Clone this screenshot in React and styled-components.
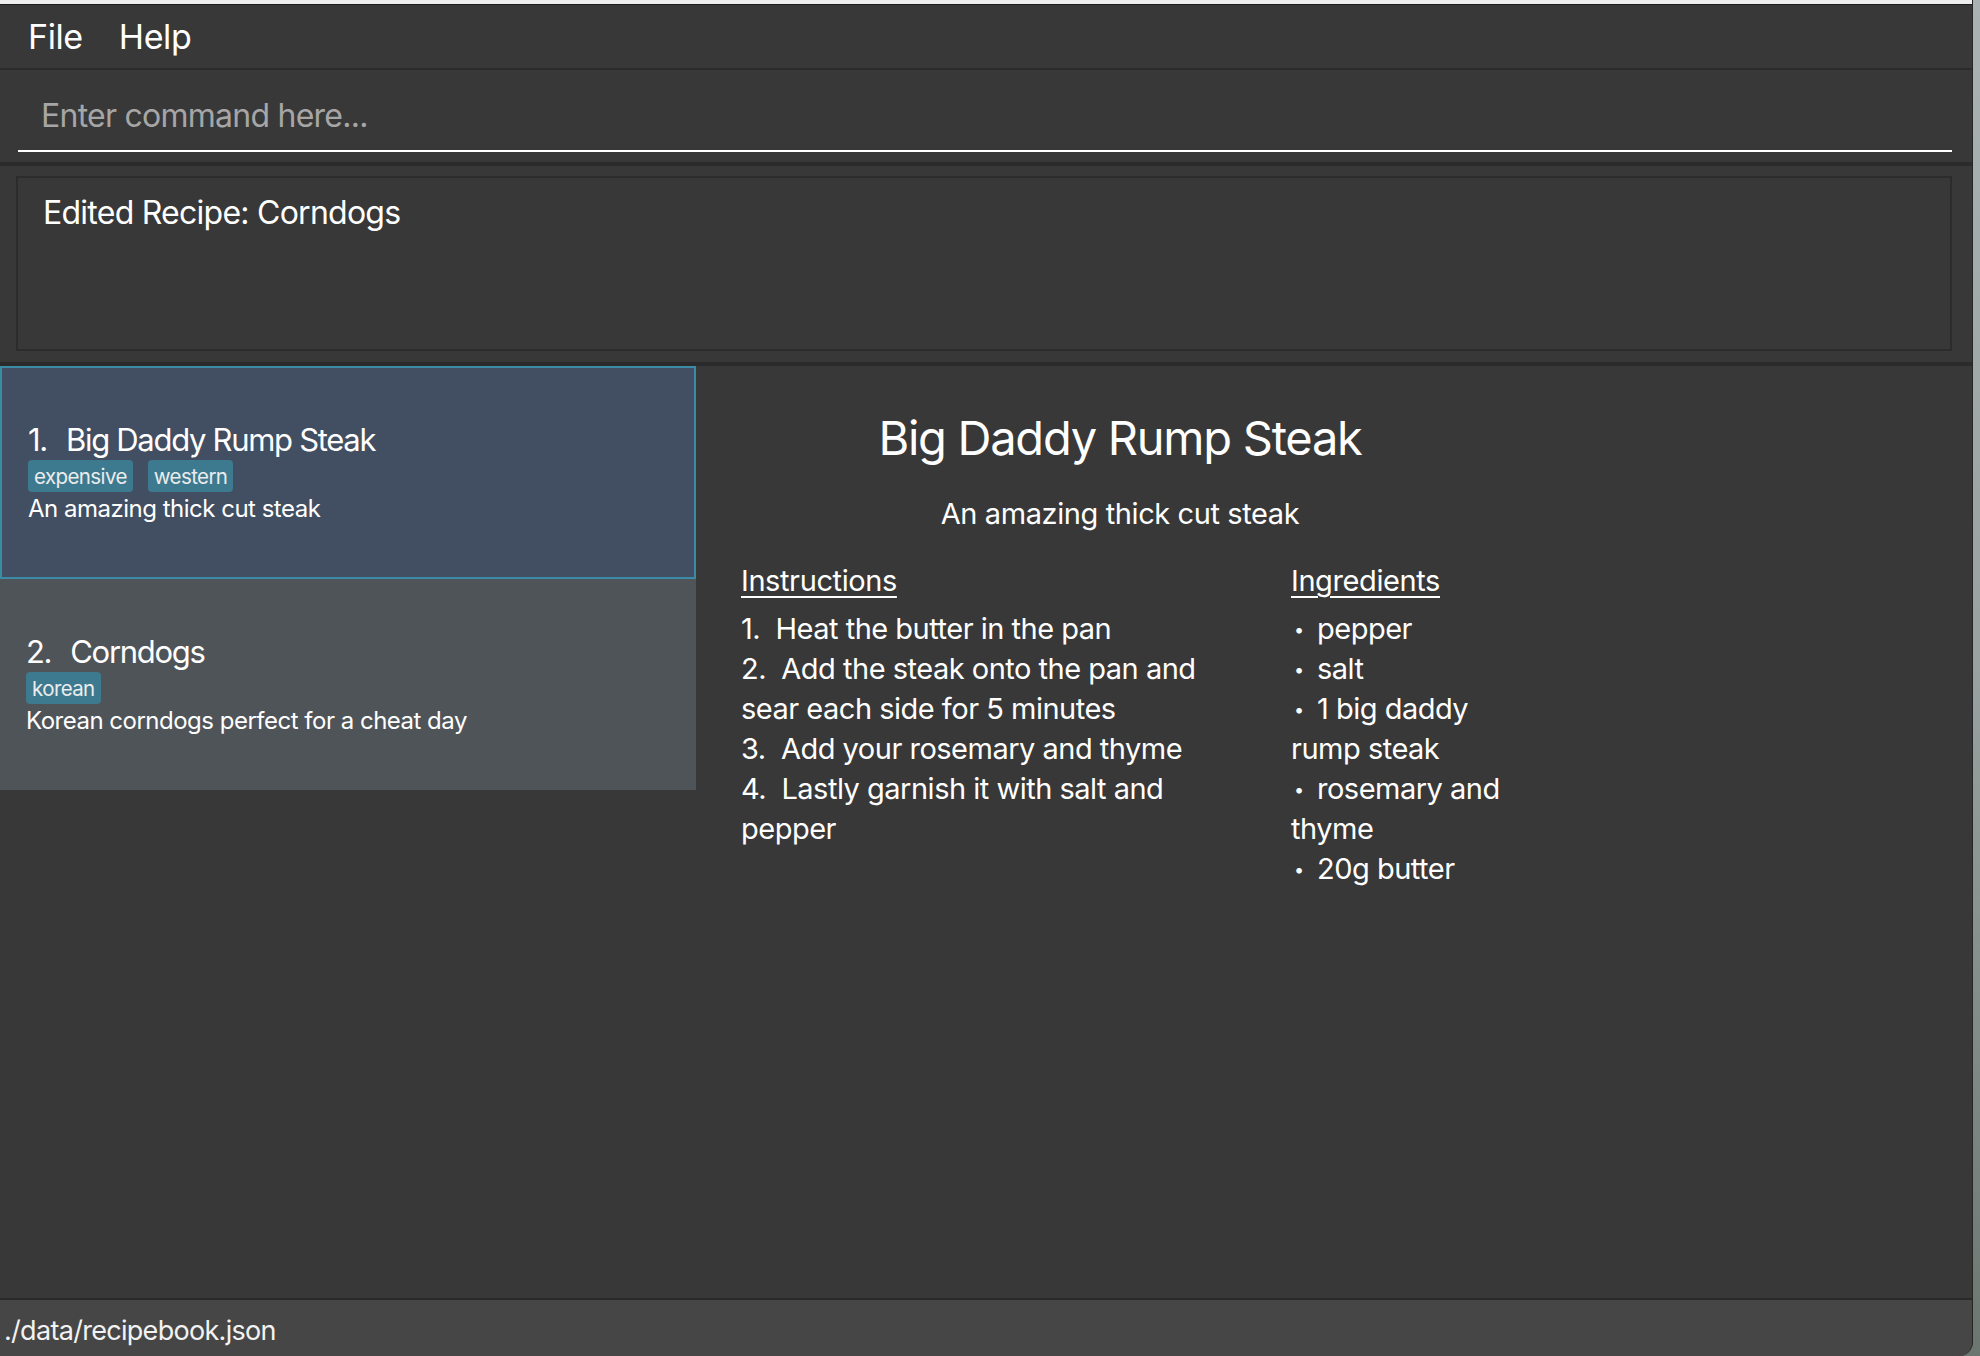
import styled, { createGlobalStyle } from 'styled-components';

const GlobalStyle = createGlobalStyle`
  html, body {
    margin: 0;
    padding: 0;
    height: 1356px;
    overflow: hidden;
    background: linear-gradient(180deg, #a9b1b3 0%, #98a19f 50%, #6b7671 100%);
    font-family: Inter, "Noto Sans", sans-serif;
  }
`;

const Window = styled.div`
  width: 1972px;
  height: 1356px;
  display: flex;
  flex-direction: column;
  background: #383838;
  border-right: 1px solid #262626;
  border-bottom-right-radius: 14px;
  overflow: hidden;
`;

const TopStrip = styled.div`
  height: 4px;
  background: #eeeeee;
  border-bottom: 1px solid #1c1c1c;
`;

const MenuBar = styled.div`
  height: 63px;
  display: flex;
  align-items: center;
  gap: 36px;
  padding-left: 28px;
  border-bottom: 2px solid #2b2b2b;
`;

const MenuItem = styled.span`
  font-size: 34px;
  color: #ffffff;
  letter-spacing: -0.4px;
`;

const CommandSection = styled.div`
  height: 92px;
  padding: 10px 20px 10px 18px;
  box-sizing: border-box;
`;

const CommandInput = styled.input`
  width: 100%;
  height: 72px;
  box-sizing: border-box;
  background: transparent;
  border: none;
  border-bottom: 2px solid #ffffff;
  outline: none;
  padding: 0 0 0 23px;
  font-family: inherit;
  font-size: 32px;
  letter-spacing: -0.75px;
  color: #ffffff;
  &::placeholder {
    color: #a6a6a6;
  }
`;

const Divider = styled.div`
  height: 4px;
  background: #2b2b2b;
`;

const ResultSection = styled.div`
  height: 196px;
  padding: 10px 20px 11px 16px;
  box-sizing: border-box;
`;

const ResultBox = styled.div`
  height: 100%;
  box-sizing: border-box;
  border: 2px solid #2c2c2c;
  padding: 16px 25px;
  font-size: 32px;
  line-height: 38px;
  color: #ffffff;
  letter-spacing: -0.75px;
`;

const Main = styled.div`
  flex: 1;
  display: flex;
  min-height: 0;
`;

const ListPane = styled.div`
  width: 696px;
  display: flex;
  flex-direction: column;
`;

const Card = styled.div`
  height: ${(p) => (p.$selected ? 213 : 211)}px;
  box-sizing: border-box;
  display: flex;
  flex-direction: column;
  justify-content: center;
  padding-left: 26px;
  background: ${(p) => (p.$selected ? '#424e61' : '#4f5459')};
  border: ${(p) => (p.$selected ? '2px solid #3b8ba6' : 'none')};
  color: #ffffff;
`;

const CardTitle = styled.div`
  font-size: 31px;
  line-height: 38px;
  letter-spacing: -1.3px;
`;

const Index = styled.span`
  margin-right: 19px;
`;

const TagRow = styled.div`
  display: flex;
  gap: 15px;
  margin-top: 1px;
`;

const Tag = styled.span`
  height: 32px;
  display: flex;
  align-items: center;
  padding: 0 6px;
  border-radius: 4px;
  background: #3d7a90;
  color: #ececec;
  font-size: 20.5px;
  letter-spacing: -0.6px;
`;

const CardDesc = styled.div`
  margin-top: 2px;
  font-size: 24px;
  line-height: 30px;
  letter-spacing: -0.5px;
`;

const DetailPane = styled.div`
  flex: 1;
  padding: 43px 0 0 45px;
  color: #ffffff;
`;

const DetailHead = styled.div`
  width: 758px;
  text-align: center;
`;

const DetailTitle = styled.div`
  font-size: 47px;
  line-height: 58px;
  letter-spacing: -1.25px;
`;

const DetailDesc = styled.div`
  margin-top: 29px;
  font-size: 29px;
  line-height: 35px;
  letter-spacing: -0.4px;
`;

const Columns = styled.div`
  display: flex;
  gap: 70px;
  margin-top: 33px;
`;

const Column = styled.div`
  width: ${(p) => p.$width}px;
`;

const SectionHeading = styled.div`
  font-size: 29px;
  line-height: 34px;
  letter-spacing: -0.4px;
  text-decoration: underline;
  text-decoration-thickness: 2px;
  text-underline-offset: 5px;
  margin-bottom: 11px;
`;

const Line = styled.div`
  font-size: 29px;
  line-height: 40px;
  letter-spacing: -0.5px;
`;

const Bullet = styled.span`
  display: inline-block;
  width: 26px;
  padding-left: 3px;
  box-sizing: border-box;
  font-size: 18px;
  line-height: 1;
  vertical-align: 3px;
`;

const StatusBar = styled.div`
  height: 58px;
  box-sizing: border-box;
  border-top: 2px solid #2a2a2a;
  background: #464646;
  padding: 11px 0 0 4px;
  font-size: 27px;
  line-height: 40px;
  letter-spacing: -0.7px;
  color: #f2f2f2;
`;

const recipes = [
  {
    name: 'Big Daddy Rump Steak',
    tags: ['expensive', 'western'],
    desc: 'An amazing thick cut steak',
  },
  {
    name: 'Corndogs',
    tags: ['korean'],
    desc: 'Korean corndogs perfect for a cheat day',
  },
];

const instructions = [
  'Heat the butter in the pan',
  'Add the steak onto the pan and sear each side for 5 minutes',
  'Add your rosemary and thyme',
  'Lastly garnish it with salt and pepper',
];

const ingredients = ['pepper', 'salt', '1 big daddy rump steak', 'rosemary and thyme', '20g butter'];

const App = () => (
  <>
    <GlobalStyle />
    <Window>
      <TopStrip />
      <MenuBar>
        <MenuItem>File</MenuItem>
        <MenuItem>Help</MenuItem>
      </MenuBar>
      <CommandSection>
        <CommandInput placeholder="Enter command here..." />
      </CommandSection>
      <Divider />
      <ResultSection>
        <ResultBox>Edited Recipe: Corndogs</ResultBox>
      </ResultSection>
      <Divider />
      <Main>
        <ListPane>
          {recipes.map((r, i) => (
            <Card key={r.name} $selected={i === 0}>
              <CardTitle>
                <Index>{i + 1}.</Index>
                {r.name}
              </CardTitle>
              <TagRow>
                {r.tags.map((t) => (
                  <Tag key={t}>{t}</Tag>
                ))}
              </TagRow>
              <CardDesc>{r.desc}</CardDesc>
            </Card>
          ))}
        </ListPane>
        <DetailPane>
          <DetailHead>
            <DetailTitle>Big Daddy Rump Steak</DetailTitle>
            <DetailDesc>An amazing thick cut steak</DetailDesc>
          </DetailHead>
          <Columns>
            <Column $width={480}>
              <SectionHeading>Instructions</SectionHeading>
              {instructions.map((s, i) => (
                <Line key={s}>
                  {i + 1}.&nbsp;&nbsp;{s}
                </Line>
              ))}
            </Column>
            <Column $width={230}>
              <SectionHeading>Ingredients</SectionHeading>
              {ingredients.map((s) => (
                <Line key={s}>
                  <Bullet>•</Bullet>
                  {s}
                </Line>
              ))}
            </Column>
          </Columns>
        </DetailPane>
      </Main>
      <StatusBar>./data/recipebook.json</StatusBar>
    </Window>
  </>
);

export default App;
